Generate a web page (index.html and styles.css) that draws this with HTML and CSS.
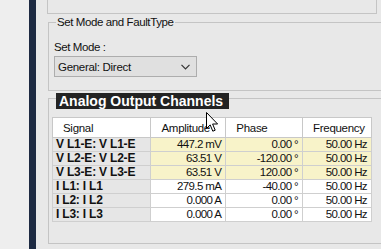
FILE: index.html
```html
<!DOCTYPE html>
<html lang="en">
<head>
  <meta charset="UTF-8">
  <title>Analog Output Channels</title>
  <link rel="stylesheet" href="styles.css">
</head>
<body>
  <div class="screen">
    <div class="sidebar"></div>
    <div class="divider"></div>
    <div class="panel">
      <div class="prev-box"></div>
      <div class="group mode-group">
        <div class="group-title">Set Mode and FaultType</div>
        <div class="field-label">Set Mode :</div>
        <div class="select">
          <span>General: Direct</span>
          <svg class="chevron" width="9" height="6" viewBox="0 0 9 6"><path d="M0.5 0.8 L4.5 4.8 L8.5 0.8" fill="none" stroke="#333" stroke-width="1.2"/></svg>
        </div>
      </div>
      <div class="group channels-group">
        <div class="group-title dark">Analog Output Channels</div>
        <table class="grid">
          <tr>
            <th class="c-sig">Signal</th>
            <th class="c-amp">Amplitude</th>
            <th class="c-ph">Phase</th>
            <th class="c-fr">Frequency</th>
          </tr>
          <tr class="hl">
            <td class="sig">V L1-E: V L1-E</td><td>447.2 mV</td><td>0.00 °</td><td>50.00 Hz</td>
          </tr>
          <tr class="hl">
            <td class="sig">V L2-E: V L2-E</td><td>63.51 V</td><td>-120.00 °</td><td>50.00 Hz</td>
          </tr>
          <tr class="hl">
            <td class="sig">V L3-E: V L3-E</td><td>63.51 V</td><td>120.00 °</td><td>50.00 Hz</td>
          </tr>
          <tr>
            <td class="sig">I L1: I L1</td><td>279.5 mA</td><td>-40.00 °</td><td>50.00 Hz</td>
          </tr>
          <tr>
            <td class="sig">I L2: I L2</td><td>0.000 A</td><td>0.00 °</td><td>50.00 Hz</td>
          </tr>
          <tr>
            <td class="sig">I L3: I L3</td><td>0.000 A</td><td>0.00 °</td><td>50.00 Hz</td>
          </tr>
        </table>
      </div>
    </div>
    <svg class="cursor" width="13" height="21" viewBox="0 0 13 21">
      <path d="M0.5 0.5 L0.5 16.5 L4.2 12.9 L6.8 19.2 L9.2 18.2 L6.6 12 L11.6 12 Z" fill="#fff" stroke="#000" stroke-width="1" stroke-linejoin="round"/>
    </svg>
  </div>
</body>
</html>
```
FILE: styles.css
```css
*{
  margin:0;
  padding:0;
  box-sizing: border-box;
}
body{
  width: 381px;
  height: 249px;
  overflow: hidden;
  background-color: #ececec;
  font-family: "Liberation Sans", Arial, sans-serif;
  color: #111;
}
.screen{
  position: relative;
  display: flex;
  height: 249px;
}
.sidebar{
  width: 29px;
  background-color: #eeeeee;
}
.divider{
  width: 7px;
  background-color: #1d2a42;
}
.panel{
  flex: 1;
  overflow: hidden;
  background-color: #e8e8e8;
}
.prev-box{
  width: 330px;
  height: 14px;
  margin-left: 11px;
  border: 1px solid #c4c4c4;
  border-top: none;
}
.group{
  width: 345px;
  margin-left: 12px;
  border: 1px solid #c4c4c4;
}
.group-title{
  width: max-content;
  margin-left: 7px;
  padding: 0 1px;
  font-size: 11.5px;
  letter-spacing: -0.4px;
  line-height: 14px;
  background-color: #e8e8e8;
}
.mode-group{
  margin-top: 8px;
  height: 69px;
}
.mode-group .group-title{
  margin-top: -8px;
}
.field-label{
  margin: 12px 0 0 5px;
  font-size: 11.5px;
  letter-spacing: -0.4px;
  line-height: 13px;
}
.select{
  display: flex;
  align-items: center;
  justify-content: space-between;
  width: 143px;
  height: 21px;
  margin: 2px 0 0 5px;
  padding: 0 6px 0 3px;
  background-color: #e0e0e0;
  border: 1px solid #adadad;
  font-size: 11.5px;
  letter-spacing: -0.3px;
}
.channels-group{
  margin-top: 7px;
  height: 146px;
}
.group-title.dark{
  margin-top: -6px;
  padding: 0 3px;
  height: 16px;
  width: 173px;
  line-height: 16px;
  font-size: 14px;
  font-weight: bold;
  letter-spacing: 0;
  color: #fff;
  background-color: #232323;
}
.grid{
  margin: 8px 0 0 3px;
  border-collapse: collapse;
  width: 320px;
  font-size: 11.5px;
  letter-spacing: -0.6px;
}
.grid th{
  height: 20px;
  padding: 0 0 0 10px;
  text-align: left;
  font-weight: normal;
  letter-spacing: -0.3px;
  background-color: #fff;
  border: 1px solid #c8c8c8;
}
.grid td{
  height: 14px;
  padding: 0 4px 0 0;
  line-height: 13px;
  text-align: right;
  background-color: #fff;
  border: 1px solid #cfcfcf;
}
.grid .hl td{
  background-color: #f8f3c9;
}
.grid td.sig{
  padding: 0 0 0 3px;
  text-align: left;
  font-size: 12px;
  font-weight: bold;
  letter-spacing: -0.2px;
  background-color: #e6e6e6;
}
.c-sig{ width: 99px; }
.c-amp{ width: 75px; }
.c-ph{ width: 77px; }
.c-fr{ width: 69px; }
.cursor{
  position: absolute;
  left: 206px;
  top: 112px;
}
```
